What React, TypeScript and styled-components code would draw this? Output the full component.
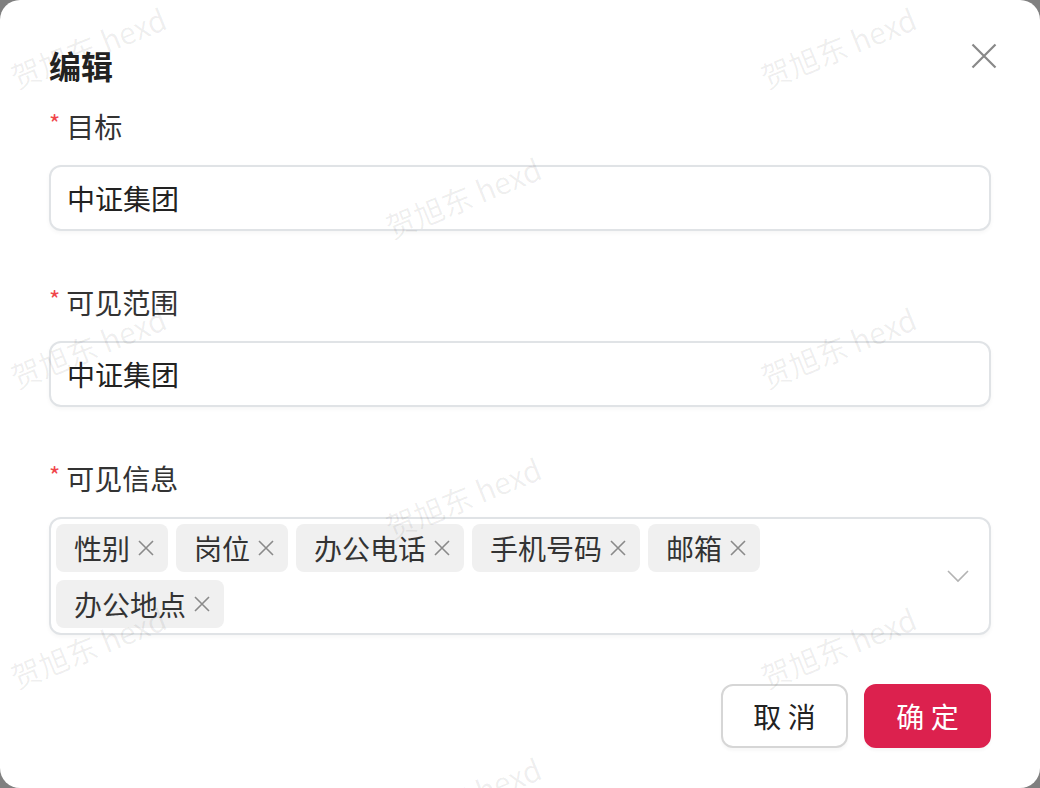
import React from 'react';
import styled, { createGlobalStyle } from 'styled-components';

const GlobalStyle = createGlobalStyle`
    html, body { margin: 0; padding: 0; background: #808080; }
    body { font-family: "Noto Sans CJK SC", "Noto Sans", sans-serif; }
    * { box-sizing: border-box; }
`;

const Dialog = styled.div`
    position: relative; width: 1040px; height: 788px; overflow: hidden;
    background: #fff; border-radius: 20px; padding: 43px 49px 0;
    color: #333;
`;

const Title = styled.h2`
    margin: 0; font-size: 32px; line-height: 44px; font-weight: 700; color: #222;
`;

const CloseButton = styled.button`
    position: absolute; top: 43px; right: 43px; width: 26px; height: 26px;
    padding: 0; border: none; background: none; cursor: pointer;
    svg { display: block; }
`;

const Form = styled.div`
    display: flex; flex-direction: column; gap: 51px; margin-top: 19px;
`;

const Field = styled.div`
    display: flex; flex-direction: column; gap: 19px;
`;

const Label = styled.div`
    height: 40px; line-height: 40px; font-size: 28px; color: #333;
    display: flex; align-items: center;
`;

const Required = styled.span`
    color: #f0454a; font-size: 24px; margin-right: 6px; position: relative; top: -3px;
`;

const InputBox = styled.div`
    height: 66px; border: 2px solid #e0e3e6; border-radius: 12px;
    padding: 0 16px; display: flex; align-items: center;
    font-size: 28px; color: #222; background: #fff;
    box-shadow: 0 2px 4px rgba(0, 0, 0, 0.04);
`;

const SelectBox = styled.div`
    border: 2px solid #e0e3e6; border-radius: 12px; padding: 5px;
    display: flex; align-items: center; background: #fff;
    box-shadow: 0 2px 4px rgba(0, 0, 0, 0.04);
`;

const TagList = styled.div`
    flex: 1; display: flex; flex-wrap: wrap; gap: 8px;
`;

const Tag = styled.span`
    height: 48px; display: inline-flex; align-items: center; gap: 6px;
    padding: 0 12px 0 18px; background: #f0f0f0; border-radius: 8px;
    font-size: 28px; color: #333;
    svg { display: block; }
`;

const Chevron = styled.span`
    margin: 0 15px 0 24px; display: flex;
`;

const Footer = styled.div`
    display: flex; justify-content: flex-end; gap: 16px; margin-top: 49px;
`;

const Button = styled.button<{ $primary?: boolean }>`
    width: 127px; height: 64px; border-radius: 12px; font-size: 28px;
    font-family: "Noto Sans CJK SC", "Noto Sans", sans-serif; cursor: pointer;
    border: 2px solid ${p => (p.$primary ? '#dc214e' : '#d6d6d6')};
    background: ${p => (p.$primary ? '#dc214e' : '#fff')};
    color: ${p => (p.$primary ? '#fff' : '#222')};
    box-shadow: 0 3px 3px rgba(0, 0, 0, 0.03);
`;

const Watermarks = styled.div`
    position: absolute; inset: 0; pointer-events: none; overflow: hidden;
`;

const Mark = styled.span`
    position: absolute; white-space: nowrap; font-size: 30px;
    color: rgba(0, 0, 0, 0.065); transform: translate(-50%, -50%) rotate(-22deg);
`;

const tags = ['性别', '岗位', '办公电话', '手机号码', '邮箱', '办公地点'];

const marks: { x: number; y: number }[] = [];
for (let j = 0; j < 6; j++) {
    for (let i = 0; i < 3; i++) {
        if ((i + j) % 2 === 0) marks.push({ x: 88 + 375 * i, y: 47 + 150 * j });
    }
}

const TagClose = () => (
    <svg width="20" height="20" viewBox="0 0 20 20">
        <path d="M3 3 L17 17 M17 3 L3 17" stroke="#8a8a8a" strokeWidth="1.6" fill="none" />
    </svg>
);

export default function App() {
    return (
        <>
            <GlobalStyle />
            <Dialog>
                <Title>编辑</Title>
                <CloseButton aria-label="关闭">
                    <svg width="26" height="26" viewBox="0 0 26 26">
                        <path d="M1.5 1.5 L24.5 24.5 M24.5 1.5 L1.5 24.5" stroke="#888" strokeWidth="2.2" fill="none" />
                    </svg>
                </CloseButton>
                <Form>
                    <Field>
                        <Label><Required>*</Required>目标</Label>
                        <InputBox>中证集团</InputBox>
                    </Field>
                    <Field>
                        <Label><Required>*</Required>可见范围</Label>
                        <InputBox>中证集团</InputBox>
                    </Field>
                    <Field>
                        <Label><Required>*</Required>可见信息</Label>
                        <SelectBox>
                            <TagList>
                                {tags.map(t => (
                                    <Tag key={t}>{t}<TagClose /></Tag>
                                ))}
                            </TagList>
                            <Chevron>
                                <svg width="22" height="14" viewBox="0 0 22 14">
                                    <path d="M1 2 L11 12 L21 2" stroke="#b3b3b3" strokeWidth="1.6" fill="none" />
                                </svg>
                            </Chevron>
                        </SelectBox>
                    </Field>
                </Form>
                <Footer>
                    <Button>取 消</Button>
                    <Button $primary>确 定</Button>
                </Footer>
                <Watermarks>
                    {marks.map((m, k) => (
                        <Mark key={k} style={{ left: m.x, top: m.y }}>贺旭东 hexd</Mark>
                    ))}
                </Watermarks>
            </Dialog>
        </>
    );
}
